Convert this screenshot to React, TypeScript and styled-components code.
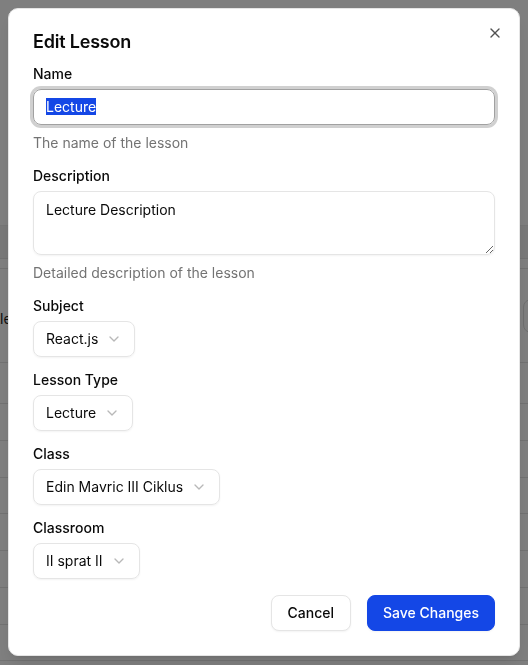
import React, { useEffect, useRef } from 'react';
import styled, { createGlobalStyle } from 'styled-components';

const GlobalStyle = createGlobalStyle`
  * { box-sizing: border-box; }
  html, body { margin: 0; padding: 0; height: 100%; overflow: hidden; }
  body {
    font-family: Inter, "Noto Sans", "Liberation Sans", sans-serif;
    color: #0a0a0a;
    background: #fff;
    -webkit-font-smoothing: antialiased;
  }
  ::selection { background: #1447e6; color: #fff; }
`;

/* page behind the dialog */

const BackPage = styled.div`
  width: 100%;
  height: 100vh;
  background: #fff;
  display: flex;
  flex-direction: column;
  overflow: hidden;
`;

const TopArea = styled.div`
  height: 226px;
  flex-shrink: 0;
  border-bottom: 1px solid #ececec;
`;

const TableRow = styled.div<{ $h: number; $muted?: boolean }>`
  height: ${p => p.$h}px;
  flex-shrink: 0;
  display: flex;
  align-items: center;
  justify-content: space-between;
  border-bottom: 1px solid #e5e5e5;
  background: ${p => (p.$muted ? '#f3f3f3' : '#fff')};
  font-size: 14px;
`;

const RowText = styled.span`
  margin-left: -17px;
  margin-top: 6px;
  color: #1a1a1a;
`;

const RowButton = styled.div`
  width: 80px;
  height: 34px;
  margin-right: -75px;
  border: 1px solid #dedede;
  border-radius: 8px;
  background: #fff;
`;

/* dialog */

const Overlay = styled.div`
  position: fixed;
  inset: 0;
  padding-bottom: 2px;
  background: rgba(0, 0, 0, 0.5);
  display: flex;
  align-items: center;
  justify-content: center;
`;

const Dialog = styled.div`
  position: relative;
  width: 512px;
  background: #fff;
  border: 1px solid #e5e5e5;
  border-radius: 10px;
  padding: 24px;
  display: flex;
  flex-direction: column;
  gap: 16px;
  box-shadow: 0 10px 15px -3px rgba(0, 0, 0, 0.1), 0 4px 6px -4px rgba(0, 0, 0, 0.1);
`;

const Title = styled.h2`
  margin: 0;
  font-size: 18px;
  line-height: 18px;
  font-weight: 600;
  letter-spacing: -0.2px;
`;

const CloseButton = styled.button`
  position: absolute;
  top: 16px;
  right: 16px;
  width: 16px;
  height: 16px;
  padding: 0;
  border: none;
  background: none;
  color: #0a0a0a;
  opacity: 0.7;
  display: flex;
  cursor: pointer;
`;

const Form = styled.form`
  display: flex;
  flex-direction: column;
  gap: 16px;
`;

const Field = styled.div`
  display: flex;
  flex-direction: column;
  align-items: flex-start;
  gap: 8px;
`;

const Label = styled.label`
  font-size: 14px;
  line-height: 14px;
  font-weight: 500;
`;

const Hint = styled.p`
  margin: 0;
  font-size: 14px;
  line-height: 20px;
  color: #737373;
`;

const TextInput = styled.input<{ $focused?: boolean }>`
  width: 100%;
  height: 36px;
  padding: 4px 12px;
  font: inherit;
  font-size: 14px;
  color: #0a0a0a;
  background: transparent;
  border: 1px solid ${p => (p.$focused ? '#a1a1a1' : '#e5e5e5')};
  border-radius: 8px;
  outline: none;
  box-shadow: ${p => (p.$focused ? '0 0 0 3px rgba(161, 161, 161, 0.5)' : '0 1px 2px rgba(0, 0, 0, 0.05)')};
`;

const TextArea = styled.textarea`
  width: 100%;
  height: 64px;
  padding: 8px 12px;
  font: inherit;
  font-size: 14px;
  line-height: 20px;
  color: #0a0a0a;
  background: transparent;
  border: 1px solid #e5e5e5;
  border-radius: 8px;
  outline: none;
  resize: vertical;
  box-shadow: 0 1px 2px rgba(0, 0, 0, 0.05);
`;

const SelectTrigger = styled.button`
  display: flex;
  align-items: center;
  gap: 8px;
  height: 36px;
  padding: 0 12px;
  font: inherit;
  font-size: 14px;
  color: #0a0a0a;
  white-space: nowrap;
  background: transparent;
  border: 1px solid #e5e5e5;
  border-radius: 8px;
  box-shadow: 0 1px 2px rgba(0, 0, 0, 0.05);

  svg {
    color: #737373;
    opacity: 0.5;
  }
`;

const Footer = styled.div`
  display: flex;
  justify-content: flex-end;
  gap: 16px;
`;

const Button = styled.button<{ $primary?: boolean }>`
  height: 36px;
  padding: 0 ${p => (p.$primary ? 15 : 16)}px;
  font: inherit;
  font-size: 14px;
  font-weight: 500;
  border-radius: 8px;
  border: 1px solid ${p => (p.$primary ? '#1447e6' : '#e5e5e5')};
  background: ${p => (p.$primary ? '#1447e6' : '#fff')};
  color: ${p => (p.$primary ? '#fff' : '#0a0a0a')};
  box-shadow: 0 1px 2px rgba(0, 0, 0, 0.05);
  cursor: pointer;
`;

const Chevron = () => (
  <svg width="16" height="16" viewBox="0 0 24 24" fill="none" stroke="currentColor" strokeWidth="2" strokeLinecap="round" strokeLinejoin="round">
    <path d="m6 9 6 6 6-6" />
  </svg>
);

const XIcon = () => (
  <svg width="16" height="16" viewBox="0 0 24 24" fill="none" stroke="currentColor" strokeWidth="2" strokeLinecap="round" strokeLinejoin="round">
    <path d="M18 6 6 18" />
    <path d="m6 6 12 12" />
  </svg>
);

const selects = [
  { label: 'Subject', value: 'React.js' },
  { label: 'Lesson Type', value: 'Lecture' },
  { label: 'Class', value: 'Edin Mavric III Ciklus' },
  { label: 'Classroom', value: 'II sprat II' },
];

const rowHeights = [41, 37, 37, 36, 37, 37, 37, 36, 36];

const App: React.FC = () => {
  const nameRef = useRef<HTMLInputElement>(null);

  useEffect(() => {
    const el = nameRef.current;
    if (el) {
      el.focus();
      el.select();
    }
  }, []);

  return (
    <>
      <GlobalStyle />
      <BackPage>
        <TopArea />
        <TableRow $h={33} $muted />
        <TableRow $h={10} />
        <TableRow $h={94}>
          <RowText>Title</RowText>
          <RowButton />
        </TableRow>
        {rowHeights.map((h, i) => (
          <TableRow key={i} $h={h} />
        ))}
      </BackPage>

      <Overlay>
        <Dialog role="dialog">
          <Title>Edit Lesson</Title>
          <CloseButton type="button" aria-label="Close">
            <XIcon />
          </CloseButton>

          <Form onSubmit={e => e.preventDefault()}>
            <Field>
              <Label>Name</Label>
              <TextInput ref={nameRef} $focused defaultValue="Lecture" />
              <Hint>The name of the lesson</Hint>
            </Field>

            <Field>
              <Label>Description</Label>
              <TextArea defaultValue="Lecture Description" />
              <Hint>Detailed description of the lesson</Hint>
            </Field>

            {selects.map(s => (
              <Field key={s.label}>
                <Label>{s.label}</Label>
                <SelectTrigger type="button">
                  <span>{s.value}</span>
                  <Chevron />
                </SelectTrigger>
              </Field>
            ))}

            <Footer>
              <Button type="button">Cancel</Button>
              <Button type="submit" $primary>Save Changes</Button>
            </Footer>
          </Form>
        </Dialog>
      </Overlay>
    </>
  );
};

export default App;
